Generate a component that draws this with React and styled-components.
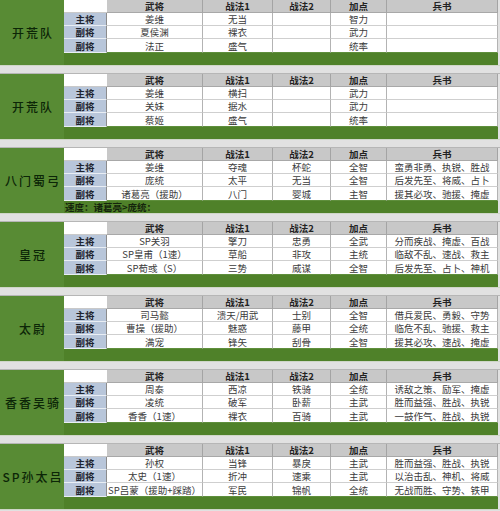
import React from 'react'
import styled, { createGlobalStyle } from 'styled-components'

const GlobalStyle = createGlobalStyle`
  body {
    margin: 0;
    background: #e2e2e2;
    font-family: "Noto Sans CJK SC", "Noto Sans", sans-serif;
  }
`

const Page = styled.div`
  width: 500px;
  height: 511px;
  overflow: hidden;
`

const Block = styled.section`
  display: grid;
  grid-template-columns: 64px 43px 96px 70px 58px 56px 111px;
  grid-template-rows: 13px 13px 13px 14px 12px;
  width: 498px;
  background: #558932;
`

const Label = styled.div`
  grid-row: 1 / -1;
  grid-column: 1;
  display: flex;
  align-items: center;
  justify-content: center;
  white-space: nowrap;
  font-family: "Noto Sans CJK SC", sans-serif;
  font-size: 12px;
  font-weight: 500;
  letter-spacing: 2px;
  padding-left: 2px;
  color: #0c2607;
  background: #588b34;
`

const BaseCell = styled.div`
  box-sizing: border-box;
  display: flex;
  align-items: center;
  justify-content: center;
  font-size: 9.5px;
  line-height: 12px;
  white-space: nowrap;
`

const Blank = styled(BaseCell)`
  background: #fff;
  border-bottom: 1px solid #c9c9c9;
`

const HeadCell = styled(BaseCell)`
  background: #c8c8c8;
  color: #222;
  font-weight: 700;
  border-right: 1px solid #a4a4a4;
  border-bottom: 1px solid #a8a8a8;
`

const RoleCell = styled(BaseCell)`
  background: #b8c6da;
  color: #1f2530;
  font-weight: 700;
  border-right: 1px solid #8c8c8c;
  border-bottom: 1px solid #e9eef4;
`

const Cell = styled(BaseCell)`
  background: #fff;
  color: #3b3b3b;
  border-right: 1px solid #b3b3b3;
  border-bottom: 1px solid ${p => (p.$last ? '#5f8f3c' : '#cfcfcf')};
`

const Bar = styled.div`
  grid-column: 2 / -1;
  display: flex;
  align-items: center;
  padding-left: 1px;
  background: #4f8129;
  color: #14240c;
  font-size: 9.5px;
  line-height: 12px;
  font-weight: 700;
`

const Separator = styled.div`
  box-sizing: border-box;
  height: 9px;
  width: 500px;
  background: #e1e1e1;
  border-top: 1px solid #cfd6c8;
  border-bottom: 1px solid #b6b6b6;
`

const headers = ['武将', '战法1', '战法2', '加点', '兵书']

const teams = [
  {
    name: '开荒队',
    rows: [
      ['主将', '姜维', '无当', '', '智力', ''],
      ['副将', '夏侯渊', '裸衣', '', '武力', ''],
      ['副将', '法正', '盛气', '', '统率', ''],
    ],
  },
  {
    name: '开荒队',
    rows: [
      ['主将', '姜维', '横扫', '', '武力', ''],
      ['副将', '关妹', '据水', '', '武力', ''],
      ['副将', '蔡姬', '盛气', '', '统率', ''],
    ],
  },
  {
    name: '八门蜀弓',
    note: '速度：诸葛亮>庞统：',
    rows: [
      ['主将', '姜维', '夺魂', '杯蛇', '全智', '蛮勇非勇、执锐、胜战'],
      ['副将', '庞统', '太平', '无当', '全智', '后发先至、将威、占卜'],
      ['副将', '诸葛亮（援助）', '八门', '婴城', '主智', '援其必攻、驰援、掩虚'],
    ],
  },
  {
    name: '皇冠',
    rows: [
      ['主将', 'SP关羽', '擎刀', '忠勇', '全武', '分而疾战、掩虚、百战'],
      ['副将', 'SP皇甫（1速）', '草船', '非攻', '主统', '临敌不乱、速战、救主'],
      ['副将', 'SP荀彧（S）', '三势', '威谋', '全智', '后发先至、占卜、神机'],
    ],
  },
  {
    name: '太尉',
    rows: [
      ['主将', '司马懿', '溃天/用武', '士别', '全智', '借兵爱民、勇毅、守势'],
      ['副将', '曹操（援助）', '魅惑', '藤甲', '全统', '临危不乱、驰援、救主'],
      ['副将', '满宠', '锋矢', '刮骨', '全智', '援其必攻、速战、掩虚'],
    ],
  },
  {
    name: '香香吴骑',
    rows: [
      ['主将', '周泰', '西凉', '铁骑', '全统', '诱敌之策、励军、掩虚'],
      ['副将', '凌统', '破军', '卧薪', '主武', '胜而益强、胜战、执锐'],
      ['副将', '香香（1速）', '裸衣', '百骑', '主武', '一鼓作气、胜战、执锐'],
    ],
  },
  {
    name: 'SP孙太吕',
    rows: [
      ['主将', '孙权', '当锋', '暴戾', '主武', '胜而益强、胜战、执锐'],
      ['副将', '太史（1速）', '折冲', '速乘', '主武', '以治击乱、神机、将威'],
      ['副将', 'SP吕蒙（援助+踩踏）', '军民', '锦帆', '全统', '无战而胜、守势、铁甲'],
    ],
  },
]

function Team({ team }) {
  return (
    <Block>
      <Label>{team.name}</Label>
      <Blank />
      {headers.map(h => (
        <HeadCell key={h}>{h}</HeadCell>
      ))}
      {team.rows.map((row, i) => (
        <React.Fragment key={i}>
          <RoleCell>{row[0]}</RoleCell>
          {row.slice(1).map((v, j) => (
            <Cell key={j} $last={i === team.rows.length - 1}>{v}</Cell>
          ))}
        </React.Fragment>
      ))}
      <Bar>{team.note}</Bar>
    </Block>
  )
}

export default function App() {
  return (
    <Page>
      <GlobalStyle />
      {teams.map((t, i) => (
        <React.Fragment key={i}>
          <Team team={t} />
          <Separator />
        </React.Fragment>
      ))}
    </Page>
  )
}
